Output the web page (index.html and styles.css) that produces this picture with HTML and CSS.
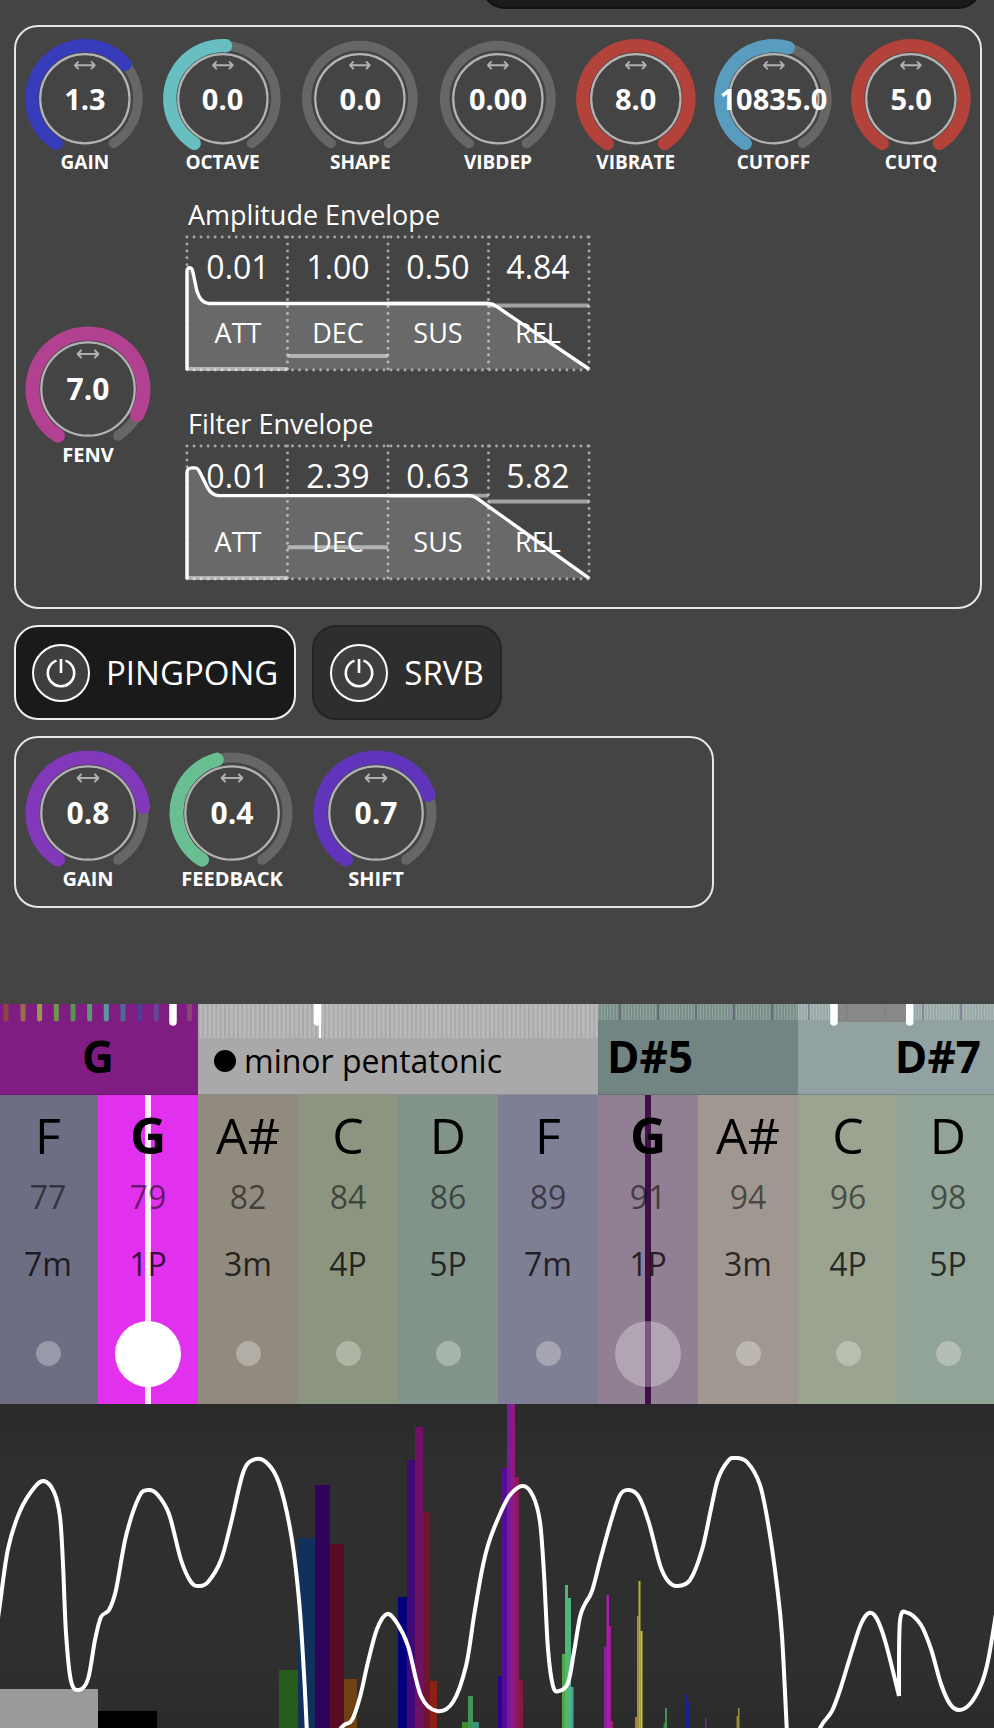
FILE: index.html
```html
<!DOCTYPE html>
<html lang="en">
<head>
<meta charset="utf-8">
<meta name="viewport" content="width=device-width, initial-scale=1">
<title>Synth</title>
<link rel="stylesheet" href="styles.css">
</head>
<body>
<svg class="defs" aria-hidden="true">
  <symbol id="dial" viewBox="0 0 144 130">
    <path class="track" d="M42 121.7A55.5 55.5 0 1 1 102 121.7"/>
  </symbol>
  <symbol id="face" viewBox="0 0 144 130">
    <circle class="ring" cx="72" cy="75" r="46.7"/>
    <path class="arrow" d="M62 40H82M65 36.5L61.7 40L65 43.5M79 36.5L82.3 40L79 43.5"/>
  </symbol>
  <symbol id="power" viewBox="0 0 32 32">
    <path class="power-line" d="M16 2V16M11.5 3.6A13.2 13.2 0 1 0 20.5 3.6"/>
  </symbol>
</svg>

<header class="top"><div class="top-card"></div></header>

<main class="synth">
  <section class="panel">
    <div class="knobs">
      <label class="knob blue"><svg viewBox="0 0 144 130"><use href="#dial"/><path class="value" pathLength="1000" stroke-dasharray="668 2000" d="M42 121.7A55.5 55.5 0 1 1 102 121.7"/><use href="#face"/></svg><input type="range"><output>1.3</output><span>GAIN</span></label>
      <label class="knob teal"><svg viewBox="0 0 144 130"><use href="#dial"/><path class="value" pathLength="1000" stroke-dasharray="510 2000" d="M42 121.7A55.5 55.5 0 1 1 102 121.7"/><use href="#face"/></svg><input type="range"><output>0.0</output><span>OCTAVE</span></label>
      <label class="knob"><svg viewBox="0 0 144 130"><use href="#dial"/><use href="#face"/></svg><input type="range"><output>0.0</output><span>SHAPE</span></label>
      <label class="knob"><svg viewBox="0 0 144 130"><use href="#dial"/><use href="#face"/></svg><input type="range"><output>0.00</output><span>VIBDEP</span></label>
      <label class="knob red"><svg viewBox="0 0 144 130"><use href="#dial"/><path class="value" d="M42 121.7A55.5 55.5 0 1 1 102 121.7"/><use href="#face"/></svg><input type="range"><output>8.0</output><span>VIBRATE</span></label>
      <label class="knob sky"><svg viewBox="0 0 144 130"><use href="#dial"/><path class="value" pathLength="1000" stroke-dasharray="553 2000" d="M42 121.7A55.5 55.5 0 1 1 102 121.7"/><use href="#face"/></svg><input type="range"><output>10835.0</output><span>CUTOFF</span></label>
      <label class="knob red"><svg viewBox="0 0 144 130"><use href="#dial"/><path class="value" d="M42 121.7A55.5 55.5 0 1 1 102 121.7"/><use href="#face"/></svg><input type="range"><output>5.0</output><span>CUTQ</span></label>
    </div>
    <div class="filter-row">
      <label class="knob large pink"><svg viewBox="0 0 144 130"><use href="#dial"/><path class="value" pathLength="1000" stroke-dasharray="900 2000" d="M42 121.7A55.5 55.5 0 1 1 102 121.7"/><use href="#face"/></svg><input type="range"><output>7.0</output><span>FENV</span></label>
      <div class="envelopes">
        <section>
          <h2>Amplitude Envelope</h2>
          <div class="envelope">
            <div class="stage"><b>0.01</b><span>ATT</span></div>
            <div class="stage"><b>1.00</b><span>DEC</span></div>
            <div class="stage"><b>0.50</b><span>SUS</span></div>
            <div class="stage"><b>4.84</b><span>REL</span></div>
            <svg viewBox="0 0 400 134" preserveAspectRatio="none" aria-hidden="true">
              <path class="dots" d="M0 0H400M0 134H400M0 0V134M100 0V134M200 0V134M300 0V134M400 0V134"/>
              <path class="level" d="M0 133H100M100 120H200M200 67H300M300 69H400"/>
              <path class="shape" d="M0 134V35Q0 31 3 31Q5 31 6 36L10 55Q14 67 22 67H300Q304 67 308 70L400 133"/>
            </svg>
          </div>
        </section>
        <section>
          <h2>Filter Envelope</h2>
          <div class="envelope">
            <div class="stage"><b>0.01</b><span>ATT</span></div>
            <div class="stage"><b>2.39</b><span>DEC</span></div>
            <div class="stage"><b>0.63</b><span>SUS</span></div>
            <div class="stage"><b>5.82</b><span>REL</span></div>
            <svg viewBox="0 0 400 134" preserveAspectRatio="none" aria-hidden="true">
              <path class="dots" d="M0 0H400M0 134H400M0 0V134M100 0V134M200 0V134M300 0V134M400 0V134"/>
              <path class="level" d="M0 133H100M100 102H200M200 50H300M300 56H400"/>
              <path class="shape" d="M0 134V27Q0 22 5 22H8Q11 22 13 27L21 43Q25 50 32 50H281Q285 50 289 53L400 133"/>
            </svg>
          </div>
        </section>
      </div>
    </div>
  </section>

  <nav class="effects">
    <button class="effect active"><i><svg><use href="#power"/></svg></i>PINGPONG</button>
    <button class="effect"><i><svg><use href="#power"/></svg></i>SRVB</button>
  </nav>

  <section class="panel effect-panel">
    <label class="knob large purple"><svg viewBox="0 0 144 130"><use href="#dial"/><path class="value" pathLength="1000" stroke-dasharray="785 2000" d="M42 121.7A55.5 55.5 0 1 1 102 121.7"/><use href="#face"/></svg><input type="range"><output>0.8</output><span>GAIN</span></label>
    <label class="knob large green"><svg viewBox="0 0 144 130"><use href="#dial"/><path class="value" pathLength="1000" stroke-dasharray="446 2000" d="M42 121.7A55.5 55.5 0 1 1 102 121.7"/><use href="#face"/></svg><input type="range"><output>0.4</output><span>FEEDBACK</span></label>
    <label class="knob large violet"><svg viewBox="0 0 144 130"><use href="#dial"/><path class="value" pathLength="1000" stroke-dasharray="741 2000" d="M42 121.7A55.5 55.5 0 1 1 102 121.7"/><use href="#face"/></svg><input type="range"><output>0.7</output><span>SHIFT</span></label>
  </section>
</main>

<div class="keyboard">
  <div class="settings">
    <button class="setting tonic">
      <svg viewBox="0 0 200 24" preserveAspectRatio="none" aria-hidden="true">
        <g class="pegs">
          <path stroke="#8a4642" d="M8 -4V15"/><path stroke="#94704a" d="M25 -4V15"/><path stroke="#9c9a4a" d="M41.6 -4V15"/><path stroke="#70964a" d="M58.3 -4V15"/><path stroke="#55964a" d="M75 -4V15"/><path stroke="#5a9a74" d="M91.6 -4V15"/><path stroke="#5a9a9a" d="M108.3 -4V15"/><path stroke="#4c6a94" d="M125 -4V15"/><path stroke="#444294" d="M141.6 -4V15"/><path stroke="#664496" d="M158.3 -4V15"/><path stroke="#8a4470" d="M191.6 -4V15"/>
        </g>
        <path class="handle" d="M175 -4V18"/>
      </svg>
      G
    </button>
    <button class="setting scale">
      <svg viewBox="0 0 400 34" preserveAspectRatio="none" aria-hidden="true">
        <path class="scale-mark" d="M122 0V34"/><path class="handle" d="M119.5 -4V18"/>
      </svg>
      <i class="dot"></i>minor pentatonic
    </button>
    <button class="setting low">D#5</button>
    <button class="setting high">
      <svg viewBox="0 0 200 24" preserveAspectRatio="none" aria-hidden="true">
        <path class="span" d="M36 0H112V18H36Z"/><path class="handle" d="M36 -4V18M111.7 -4V18"/>
      </svg>
      D#7
    </button>
  </div>
  <div class="notes">
    <button class="note f"><b>F</b><span>77</span><em>7m</em><i></i></button>
    <button class="note g root lit"><b>G</b><span>79</span><em>1P</em><i></i></button>
    <button class="note as"><b>A#</b><span>82</span><em>3m</em><i></i></button>
    <button class="note c"><b>C</b><span>84</span><em>4P</em><i></i></button>
    <button class="note d"><b>D</b><span>86</span><em>5P</em><i></i></button>
    <button class="note f2"><b>F</b><span>89</span><em>7m</em><i></i></button>
    <button class="note g2 root"><b>G</b><span>91</span><em>1P</em><i></i></button>
    <button class="note as2"><b>A#</b><span>94</span><em>3m</em><i></i></button>
    <button class="note c2"><b>C</b><span>96</span><em>4P</em><i></i></button>
    <button class="note d2"><b>D</b><span>98</span><em>5P</em><i></i></button>
  </div>
</div>

<svg class="scope" viewBox="0 0 994 324" preserveAspectRatio="none" role="img" aria-label="Waveform and spectrum">
  <g id="bars"></g>
  <g id="wave"></g>
</svg>
<script src="scope.js"></script>
</body>
</html>
```
FILE: styles.css
```css
* { box-sizing: border-box; }

body {
  margin: 0;
  background: #444;
  color: #fff;
  font-family: "Open Sans", "Noto Sans", sans-serif;
  overflow-x: hidden;
}

button {
  border: 0;
  padding: 0;
  font-family: inherit;
  color: inherit;
}

.defs { display: block; width: 0; height: 0; position: absolute; }

.top {
  display: flex;
  justify-content: flex-end;
  align-items: flex-end;
  height: 9px;
  padding-right: 12px;
  overflow: hidden;
}

.top-card {
  flex: none;
  width: 51%;
  height: 96px;
  border: 2px solid #131313;
  border-radius: 24px;
  background: #1a1a1a;
}

.synth {
  display: flex;
  flex-direction: column;
  gap: 16px;
  min-height: 995px;
  padding: 16px 12px 94px 14px;
}

.panel {
  border: 2px solid #e6e6ea;
  border-radius: 24px;
  padding-bottom: 28px;
}

/* Knobs */
.knobs { display: grid; grid-template-columns: repeat(7, 1fr); }

.knob {
  display: grid;
  justify-items: center;
  font-size: 19px;
  line-height: 22px;
  font-weight: 700;
}
.knob svg { grid-area: 1 / 1; display: block; width: 100%; overflow: visible; }
.knob input { grid-area: 1 / 1; width: 100%; margin: 0; opacity: 0; }
.knob output {
  grid-area: 1 / 1;
  align-self: center;
  padding-top: 20px;
  font-size: 29px;
  line-height: 32px;
}
.knob.large { width: 144px; font-size: 20px; }
.knob.large output { font-size: 30px; }

.track { fill: none; stroke: #666; stroke-width: 10; stroke-linecap: round; }
.ring { fill: none; stroke: #b3b3b3; stroke-width: 2.3; }
.arrow { fill: none; stroke: #b0b0b0; stroke-width: 2; stroke-linecap: round; stroke-linejoin: round; }
.value { fill: none; stroke: currentColor; stroke-width: 14; stroke-linecap: round; }
.blue .value { color: #363cba; }
.teal .value { color: #67bfc2; }
.red .value { color: #b3423a; }
.sky .value { color: #589dc0; }
.pink .value { color: #b34192; }
.purple .value { color: #8138b9; }
.green .value { color: #69bf91; }
.violet .value { color: #6034bb; }

/* Envelopes */
.filter-row {
  display: flex;
  align-items: center;
  gap: 28px;
  margin-top: 24px;
}
.filter-row .knob { padding-top: 4px; }
.envelopes { display: flex; flex-direction: column; gap: 36px; }
.envelopes h2 {
  margin: 0 0 4px;
  font-size: 27px;
  line-height: 36px;
  font-weight: 400;
}
.envelope {
  position: relative;
  display: grid;
  grid-template-columns: repeat(4, 100px);
  height: 133px;
}
.envelope svg {
  position: absolute;
  top: 0;
  left: -1px;
  width: calc(100% + 2px);
  height: 100%;
  overflow: visible;
}
.stage { display: flex; flex-direction: column; align-items: center; padding-top: 8px; }
.stage b { font-size: 32px; line-height: 44px; font-weight: 400; }
.stage span { margin-top: 24px; font-size: 27px; line-height: 40px; }
.dots { fill: none; stroke: #a6a6a6; stroke-width: 3; stroke-linecap: round; stroke-dasharray: 0 7; }
.level { fill: none; stroke: rgba(255, 255, 255, 0.5); stroke-width: 4; }
.shape { fill: rgba(255, 255, 255, 0.2); stroke: #fff; stroke-width: 3.4; stroke-linejoin: round; }

/* Effects */
.effects { display: flex; gap: 16px; }
.effect {
  display: flex;
  align-items: center;
  gap: 16px;
  height: 95px;
  padding: 0 16px;
  border: 2px solid #242424;
  border-radius: 24px;
  background: #2e2e2e;
  font-size: 33px;
}
.effect.active { border-color: #f0f0f0; background: #1a1a1a; }
.effect i {
  display: grid;
  place-items: center;
  width: 58px;
  height: 58px;
  border: 2px solid #fff;
  border-radius: 50%;
  background: #3f3f3f;
}
.effect svg { width: 32px; height: 32px; }
.power-line { fill: none; stroke: #fff; stroke-width: 2.6; }

.effect-panel { display: flex; width: 700px; max-width: 100%; padding-bottom: 16px; }

/* Keyboard */
.keyboard { margin: 0 -4px 0 -2px; color: #000; }
.settings { display: grid; grid-template-columns: 2fr 4fr 2fr 2fr; height: 91px; }
.setting {
  position: relative;
  display: flex;
  align-items: center;
  padding: 14px 9px 0;
  border-bottom: 1px solid rgba(0, 0, 0, 0.15);
  font-size: 44px;
  line-height: 60px;
  font-weight: 700;
}
.setting svg {
  position: absolute;
  top: 0;
  left: 0;
  width: 100%;
  height: 24px;
}
.tonic { justify-content: center; background: #7f1d82; }
.scale {
  background-color: #a9a9a9;
  background-image: linear-gradient(90deg, transparent 50%, #b9b9b9 50%);
  background-size: 1.087% 34px;
  background-repeat: repeat-x;
  gap: 8px;
  padding: 24px 16px 0;
  font-size: 32px;
  font-weight: 400;
}
.scale svg { height: 34px; }
.low, .high {
  background-repeat: repeat-x;
  background-size: 38px 16px, 3px 16px;
  background-position: 21px 0, 0 0;
}
.low {
  background-color: #728583;
  background-image: linear-gradient(90deg, #686a7a 2px, transparent 2px), linear-gradient(90deg, #8fa29e 50%, #7b8f8b 50%);
}
.high {
  justify-content: flex-end;
  padding-right: 17px;
  background-color: #92a1a1;
  background-position: 10px 0, 0 0;
  background-image: linear-gradient(90deg, #85829a 2px, transparent 2px), linear-gradient(90deg, #acbab8 50%, #99a9a8 50%);
}
.pegs { fill: none; stroke-width: 5; stroke-linecap: round; }
.handle { fill: none; stroke: #fff; stroke-width: 7.5; stroke-linecap: round; }
.scale-mark { fill: none; stroke: #fff; stroke-width: 2; }
.span { fill: rgba(130, 130, 130, 0.85); }
.dot { width: 22px; height: 22px; border-radius: 50%; background: #000; }

.notes { display: grid; grid-template-columns: repeat(10, 1fr); }
.note {
  display: flex;
  flex-direction: column;
  align-items: center;
  height: 309px;
  padding-top: 4px;
}
.note b { font-size: 50px; line-height: 72px; font-weight: 400; }
.note span { margin-top: 4px; font-size: 32px; line-height: 44px; color: rgba(0, 0, 0, 0.55); }
.note em { margin-top: 23px; font-size: 32px; line-height: 44px; font-style: normal; color: rgba(0, 0, 0, 0.75); }
.note i {
  display: block;
  width: 25px;
  height: 25px;
  margin: auto 0 38px;
  border-radius: 50%;
  background: rgba(255, 255, 255, 0.3);
}
.note.root b { font-weight: 700; }
.note.root i { width: 66px; height: 66px; margin-bottom: 17px; }
.note.lit i { background: #fff; }
.f { background: #6d6e84; }
.g { background: linear-gradient(#fdeafd, #fdeafd) center / 6px 100% no-repeat #e231ee; }
.as { background: #918a7e; }
.c { background: #8b957f; }
.d { background: #82948a; }
.f2 { background: #7e7e94; }
.g2 { background: linear-gradient(#3f1045, #3f1045) center / 6px 100% no-repeat #917f93; }
.as2 { background: #a09890; }
.c2 { background: #9aa490; }
.d2 { background: #92a398; }

/* Oscilloscope */
.scope {
  display: block;
  width: 100%;
  height: 324px;
  background: linear-gradient(#2a2a2a, #2f2f2f 20%, #2f2f2f 80%, #2b2b2b);
}
.wave { fill: none; stroke: #fff; stroke-width: 4; stroke-linejoin: round; }
```
FILE: scope.js
```js
const NS = "http://www.w3.org/2000/svg";

// Spectrum bins: left, right, top, colour
const bins = [
  [0, 98, 285, "#9a9a9a"], [98, 157, 307, "#000"],
  [279, 298, 266, "#265c1b"], [298, 315, 134, "#11305a"], [315, 330, 81, "#30045a"],
  [330, 344, 140, "#560c22"], [344, 357, 275, "#6f4214"],
  [398, 407, 193, "#02007c"], [407, 415, 56, "#410878"], [415, 423, 23, "#6f1266"],
  [423, 430, 108, "#701430"], [430, 437, 277, "#8b2214"],
  [462, 468, 318, "#3f8a2c"], [468, 473, 292, "#40955a"], [473, 479, 318, "#3f8f80"],
  [498, 502, 272, "#2c0292"], [502, 507, 64, "#560c96"], [507, 511, 0, "#7d1a98"],
  [511, 515, 0, "#8f1a80"], [515, 519, 73, "#8b1b58"], [519, 523, 276, "#841a3a"],
  [562, 565, 250, "#4fa748"], [565, 568, 181, "#54b868"], [568, 571, 194, "#50b384"], [571, 573.5, 283, "#4aa590"],
  [604, 606.5, 243, "#8a1ea8"], [606.5, 609, 191, "#a81fb0"], [609, 611, 222, "#a01f88"], [611, 613, 317, "#a0206a"],
  [635, 637, 313, "#b08028"], [637, 638.5, 212, "#a89838"], [638.5, 640.5, 177, "#b8b03c"], [640.5, 642.5, 227, "#c8c840"],
  [663.5, 665, 319, "#408040"], [665, 667, 304, "#409058"],
  [685.5, 687.5, 290, "#1820a0"], [687.5, 689, 298, "#18208a"],
  [705, 706.5, 314, "#882090"], [736.5, 738, 312, "#a08030"], [738, 739.5, 304, "#989038"]
];

const waves = [
  [[-2, 214], [0, 200], [8, 145], [20, 107], [34, 84], [44, 77], [54, 88], [60, 113], [63, 160], [66, 229], [71, 277], [79, 286],
   [88, 275], [95, 236], [101, 213], [109, 206], [116, 186], [126, 132], [139, 93], [148, 86], [157, 90], [169, 110], [181, 156],
   [191, 178], [199, 182], [208, 178], [221, 156], [231, 119], [243, 69], [253, 56], [266, 58], [279, 79], [291, 130], [299, 196],
   [304, 270], [307, 330]],
  [[336, 330], [344, 321], [352, 316], [360, 293], [368, 258], [377, 225], [387, 210], [397, 219], [408, 242], [421, 292],
   [437, 307], [453, 298], [466, 262], [474, 212], [482, 166], [489, 138], [500, 110], [510, 91], [523, 82], [533, 92], [540, 118],
   [544, 170], [548, 245], [553, 282], [559, 287], [568, 279], [574, 248], [580, 213], [585, 200], [592, 187], [601, 153],
   [611, 117], [620, 91], [629, 86], [639, 93], [649, 119], [660, 161], [668, 177], [677, 182], [690, 176], [702, 146],
   [711, 105], [718, 75], [728, 57], [735, 54], [747, 58], [760, 81], [769, 125], [777, 182], [782, 232], [787, 330]],
  [[817, 330], [823, 319], [832, 307], [840, 286], [852, 247], [861, 220], [869, 209], [877, 215], [886, 240], [899, 292]],
  [[899, 292], [900, 217], [908, 209], [921, 221], [931, 245], [941, 280], [950, 300], [959, 306], [970, 300], [981, 281],
   [988, 257], [996, 210]]
];

function smooth(points) {
  let d = `M${points[0]}`;
  for (let i = 0; i < points.length - 1; i++) {
    const a = points[i - 1] || points[i];
    const b = points[i];
    const c = points[i + 1];
    const e = points[i + 2] || c;
    d += `C${b[0] + (c[0] - a[0]) / 6},${b[1] + (c[1] - a[1]) / 6} `;
    d += `${c[0] - (e[0] - b[0]) / 6},${c[1] - (e[1] - b[1]) / 6} ${c}`;
  }
  return d;
}

for (const [left, right, top, colour] of bins) {
  const bar = document.createElementNS(NS, "rect");
  bar.setAttribute("x", left);
  bar.setAttribute("width", right - left);
  bar.setAttribute("y", top);
  bar.setAttribute("height", 324 - top);
  bar.setAttribute("fill", colour);
  document.getElementById("bars").append(bar);
}

for (const points of waves) {
  const line = document.createElementNS(NS, "path");
  line.setAttribute("class", "wave");
  line.setAttribute("d", smooth(points));
  document.getElementById("wave").append(line);
}
```
